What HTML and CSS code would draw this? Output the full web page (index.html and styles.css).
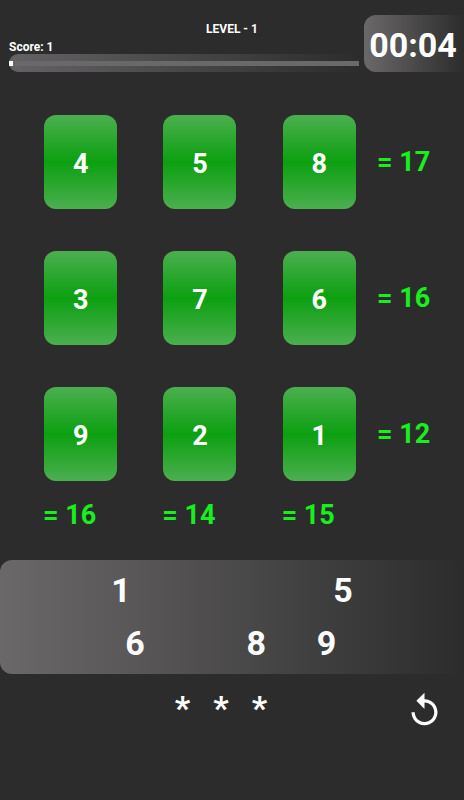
FILE: index.html
```html
<!DOCTYPE html>
<html lang="en">
<head>
<meta charset="utf-8">
<meta name="viewport" content="width=device-width, initial-scale=1">
<title>Level 1</title>
<link rel="stylesheet" href="styles.css">
</head>
<body>
<header class="header">
  <div class="status">
    <h1 class="level">LEVEL - 1</h1>
    <div class="score">Score: 1</div>
    <div class="progress"><div class="track"><div class="fill"></div></div></div>
  </div>
  <div class="timer">00:04</div>
</header>
<main>
  <section class="board">
    <button class="card">4</button><button class="card">5</button><button class="card">8</button><span class="sum">= 17</span>
    <button class="card">3</button><button class="card">7</button><button class="card">6</button><span class="sum">= 16</span>
    <button class="card">9</button><button class="card">2</button><button class="card">1</button><span class="sum">= 12</span>
    <span class="sum column-sum">= 16</span><span class="sum column-sum">= 14</span><span class="sum column-sum">= 15</span>
  </section>
  <section class="tray">
    <div class="tray-row tray-row-top">
      <button class="digit">1</button><button class="digit">5</button>
    </div>
    <div class="tray-row tray-row-bottom">
      <button class="digit">6</button><button class="digit">8</button><button class="digit">9</button>
    </div>
  </section>
</main>
<footer class="footer">
  <div class="stars"><span>*</span><span>*</span><span>*</span></div>
  <button class="replay" aria-label="Restart">
    <svg viewBox="0 0 24 24" aria-hidden="true"><path d="M12 5V1L7 6l5 5V7c3.31 0 6 2.69 6 6s-2.69 6-6 6-6-2.69-6-6H4c0 4.42 3.58 8 8 8s8-3.58 8-8-3.58-8-8-8z"/></svg>
  </button>
</footer>
</body>
</html>
```
FILE: styles.css
```css
* {
  box-sizing: border-box;
}

body {
  margin: 0;
  background: #2c2c2c;
  color: #fff;
  font-family: Roboto, "Liberation Sans", sans-serif;
  font-weight: 700;
}

button {
  padding: 0;
  border: 0;
  background: none;
  color: inherit;
  font: inherit;
  cursor: pointer;
}

.header {
  display: grid;
  grid-template-columns: 1fr 100px;
  column-gap: 5px;
  padding-top: 15px;
}

.status {
  padding-left: 9px;
}

.level {
  margin: 5px 0 0 96px;
  font-size: 12px;
  line-height: 18px;
  text-align: center;
}

.score {
  padding-top: 2px;
  font-size: 12px;
  line-height: 14px;
}

.progress {
  display: flex;
  align-items: center;
  height: 18px;
  border-radius: 9px 0 0 9px;
  background: linear-gradient(to right, #646264, #2c2c2c);
}

.track {
  flex: 1;
  height: 5px;
  background: #6b686b;
}

.fill {
  width: 4px;
  height: 5px;
  background: #fff;
}

.timer {
  height: 57px;
  padding-right: 2px;
  border-radius: 12px 0 0 12px;
  background: linear-gradient(to right, #6b686a, #2c2c2c);
  font-size: 34px;
  line-height: 61px;
  text-align: center;
}

.board {
  display: grid;
  grid-template-columns: repeat(3, 1fr) 65px;
  row-gap: 42px;
  padding: 43px 20px 0 21px;
}

.card {
  justify-self: center;
  width: 73px;
  height: 94px;
  padding-top: 3px;
  border-radius: 12px;
  background: linear-gradient(#4caf50, #0ca010, #4caf50);
  font-size: 27px;
}

.sum {
  align-self: center;
  margin-left: -2px;
  color: #17f01c;
  font-size: 27px;
  line-height: 32px;
}

.column-sum {
  margin: -24px 0 0 22px;
}

.tray {
  display: grid;
  margin-top: 29px;
  padding: 3px 0 5px;
  border-radius: 12px;
  background: linear-gradient(to right, #6b686a, #2c2c2c);
}

.tray-row {
  display: grid;
  height: 53px;
  align-items: center;
}

.tray-row-top {
  padding-left: 24%;
  grid-template-columns: 222fr 131fr;
}

.tray-row-bottom {
  padding-left: 27%;
  grid-template-columns: 121fr 70fr 147fr;
}

.digit {
  justify-self: start;
  font-size: 34px;
  line-height: 40px;
}

.footer {
  display: grid;
  grid-template-columns: 1fr 39px;
  align-items: start;
  padding: 17px 20px 0 37px;
}

.stars {
  display: flex;
  justify-content: center;
  gap: 23px;
  font-size: 34px;
  line-height: 34px;
}

.replay {
  width: 39px;
  height: 39px;
}

.replay svg {
  display: block;
  width: 100%;
  fill: #fff;
}
```
